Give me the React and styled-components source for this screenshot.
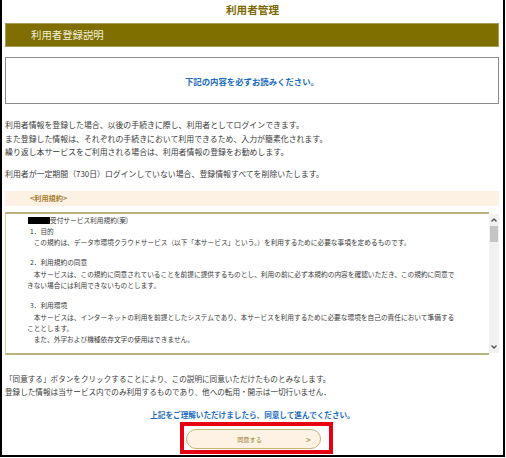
import styled, { createGlobalStyle } from 'styled-components';

const GlobalStyle = createGlobalStyle`
    html, body {
        margin: 0;
        padding: 0;
        background: #ffffff;
    }
    body {
        font-family: "Noto Sans CJK JP", "Noto Sans", sans-serif;
        color: #333333;
    }
`;

const termsSections = [
    {
        title: '1．目的',
        lines: [
            ['この規約は、データ市環境クラウドサービス（以下「本サービス」という。）を利用するために必要な事項を定めるものです。'],
        ],
    },
    {
        title: '2．利用規約の同意',
        lines: [
            [
                '本サービスは、この規約に同意されていることを前提に提供するものとし、利用の前に必ず本規約の内容を確認いただき、この規約に同意で',
                'きない場合には利用できないものとします。',
            ],
        ],
    },
    {
        title: '3．利用環境',
        lines: [
            [
                '本サービスは、インターネットの利用を前提としたシステムであり、本サービスを利用するために必要な環境を自己の責任において準備する',
                'こととします。',
            ],
            ['また、外字および機種依存文字の使用はできません。'],
        ],
    },
    {
        title: '4．利用時間',
        lines: [],
    },
];

const App = () => {
    return (
        <>
            <GlobalStyle />
            <Frame>
                <PageTitle>利用者管理</PageTitle>
                <HeaderBar>利用者登録説明</HeaderBar>

                <NoticeBox>
                    <NoticeText>下記の内容を必ずお読みください。</NoticeText>
                </NoticeBox>

                <Intro>
                    利用者情報を登録した場合、以後の手続きに際し、利用者としてログインできます。<br />
                    また登録した情報は、それぞれの手続きにおいて利用できるため、入力が簡素化されます。<br />
                    繰り返し本サービスをご利用される場合は、利用者情報の登録をお勧めします。
                </Intro>
                <Intro $gap="8.5px">
                    利用者が一定期間（730日）ログインしていない場合、登録情報すべてを削除いたします。
                </Intro>

                <TermsLabel>&lt;利用規約&gt;</TermsLabel>

                <TermsBox>
                    <TermsBody>
                        <TermsHeading>
                            <Redacted />受付サービス利用規約(案)
                        </TermsHeading>
                        {termsSections.map((section) => (
                            <TermsSection key={section.title}>
                                <SectionTitle>{section.title}</SectionTitle>
                                {section.lines.map((para, i) => (
                                    <TermsPara key={i}>
                                        {para.map((line, j) => (
                                            <span key={j}>
                                                {line}
                                                {j < para.length - 1 && <br />}
                                            </span>
                                        ))}
                                    </TermsPara>
                                ))}
                            </TermsSection>
                        ))}
                    </TermsBody>
                    <ScrollTrack>
                        <ScrollArrow viewBox="0 0 8 6">
                            <polyline points="1.5,4.5 4,2 6.5,4.5" />
                        </ScrollArrow>
                        <ScrollThumb />
                        <ScrollSpacer />
                        <ScrollArrow viewBox="0 0 8 6">
                            <polyline points="1.5,1.5 4,4 6.5,1.5" />
                        </ScrollArrow>
                    </ScrollTrack>
                </TermsBox>

                <Outro>
                    「同意する」ボタンをクリックすることにより、この説明に同意いただけたものとみなします。<br />
                    登録した情報は当サービス内でのみ利用するものであり、他への転用・開示は一切行いません．
                </Outro>

                <Prompt>上記をご理解いただけましたら、同意して進んでください。</Prompt>

                <ButtonRow>
                    <Highlight>
                        <AgreeButton type="button">
                            同意する
                            <Chevron>&gt;</Chevron>
                        </AgreeButton>
                    </Highlight>
                </ButtonRow>
            </Frame>
        </>
    );
};

export default App;

// Styled Components
const Frame = styled.div`
    box-sizing: border-box;
    width: 505px;
    height: 457px;
    border-left: 2px solid #000000;
    border-right: 2px solid #000000;
    border-bottom: 2px solid #000000;
    display: flex;
    flex-direction: column;
    overflow: hidden;
`;

const PageTitle = styled.h1`
    margin: 0;
    height: 20px;
    line-height: 20px;
    font-size: 10.6px;
    font-weight: bold;
    color: #7d6900;
    text-align: center;
`;

const HeaderBar = styled.div`
    box-sizing: border-box;
    margin: 3px 4px 0 3px;
    height: 24px;
    line-height: 22px;
    padding-left: 25px;
    background-color: #7f6e00;
    border: 1px solid #a89c58;
    color: #f3f1dc;
    font-size: 10.4px;
`;

const NoticeBox = styled.div`
    box-sizing: border-box;
    margin: 10px 4px 0 3px;
    height: 47px;
    border: 1.5px solid #8c8c8c;
    display: flex;
    align-items: center;
    justify-content: center;
`;

const NoticeText = styled.p`
    margin: 0;
    font-size: 8.4px;
    font-weight: bold;
    color: #1b6cc2;
`;

const Intro = styled.p`
    margin: ${(p) => p.$gap || '14px'} 0 0 3px;
    font-size: 7.9px;
    line-height: 13.5px;
    color: #3a3a3a;
    white-space: nowrap;
`;

const TermsLabel = styled.div`
    box-sizing: border-box;
    margin: 10px 4px 0 3px;
    height: 15px;
    line-height: 15px;
    padding-left: 25px;
    background-color: #fdf1e4;
    color: #a67d32;
    font-size: 7.2px;
    font-weight: bold;
`;

const TermsBox = styled.div`
    margin: 6px 4px 0 3px;
    height: 143px;
    display: flex;
`;

const TermsBody = styled.div`
    flex: 1;
    box-sizing: border-box;
    border-top: 2px solid #bdb27c;
    border-bottom: 2px solid #bdb27c;
    border-left: 1px solid #d2cba3;
    padding: 1px 0 0 21px;
    overflow: hidden;
    font-size: 6.7px;
    line-height: 11.3px;
    color: #3a3a3a;
    white-space: nowrap;
`;

const TermsHeading = styled.div`
    display: flex;
    align-items: center;
`;

const Redacted = styled.span`
    display: inline-block;
    width: 22px;
    height: 7px;
    margin-left: 1px;
    background: #000000;
`;

const TermsSection = styled.div`
    margin-bottom: 9px;
`;

const SectionTitle = styled.div`
    padding-left: 3px;
`;

const TermsPara = styled.div`
    text-indent: 6.7px;
`;

const ScrollTrack = styled.div`
    width: 10px;
    margin: 2px 0;
    background-color: #f1f1f1;
    display: flex;
    flex-direction: column;
    align-items: center;
`;

const ScrollArrow = styled.svg`
    width: 8px;
    height: 6px;
    margin: 3px 0;
    fill: none;
    stroke: #505050;
    stroke-width: 1.3;
`;

const ScrollThumb = styled.div`
    width: 8px;
    height: 16px;
    background-color: #c4c4c4;
`;

const ScrollSpacer = styled.div`
    flex: 1;
`;

const Outro = styled.p`
    margin: 17.5px 0 0 3px;
    font-size: 7.6px;
    line-height: 13px;
    color: #3a3a3a;
    white-space: nowrap;
`;

const Prompt = styled.p`
    margin: 10px 0 0;
    font-size: 7.6px;
    line-height: 13px;
    font-weight: bold;
    color: #1b6cc2;
    text-align: center;
`;

const ButtonRow = styled.div`
    margin-top: 1px;
    display: flex;
    justify-content: center;
    padding-left: 8px;
`;

const Highlight = styled.div`
    box-sizing: border-box;
    width: 153px;
    height: 32px;
    border: 4px solid #e60012;
    padding: 3px 8px 1px 2px;
`;

const AgreeButton = styled.button`
    position: relative;
    box-sizing: border-box;
    width: 135px;
    height: 20px;
    border: 1.5px solid #c8b27a;
    border-radius: 10px;
    background-color: #fdf2e3;
    color: #a07c32;
    font-family: inherit;
    font-size: 6.2px;
    padding: 0 8px 0 0;
    display: flex;
    align-items: center;
    justify-content: center;
    cursor: pointer;
`;

const Chevron = styled.span`
    position: absolute;
    right: 9px;
    top: 50%;
    transform: translateY(-50%);
    font-size: 9px;
    color: #9a7a36;
`;
